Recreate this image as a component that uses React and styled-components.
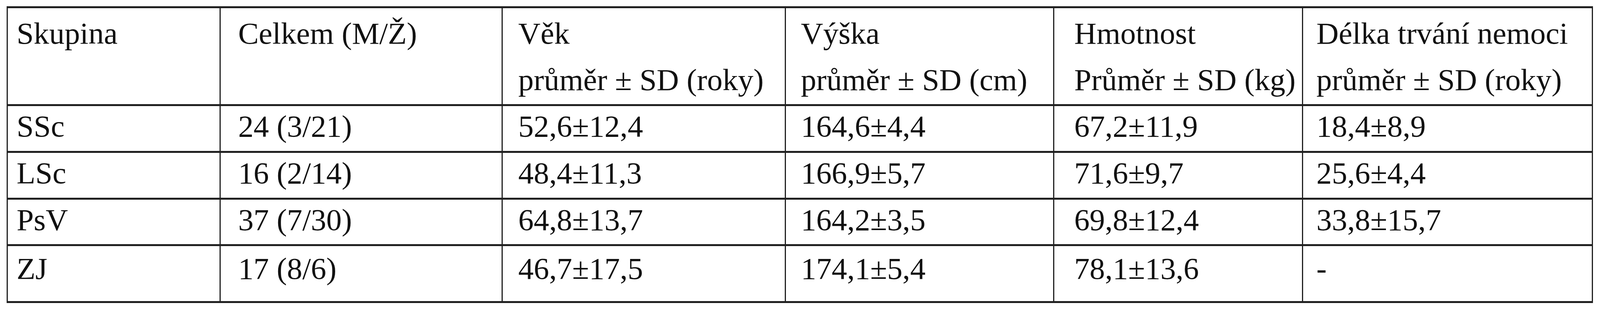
import React from "react";
import styled, { createGlobalStyle } from "styled-components";

/* Horizontal sizes are taken from the 5192px-wide reference and expressed
   relative to the viewport width, so the table keeps its proportions. */
const REF_W = 5192;
const hx = (px) => `${((px / REF_W) * 100).toFixed(5)}vw`;

const GlobalStyle = createGlobalStyle`
  html, body {
    margin: 0;
    padding: 0;
    background: #ffffff;
    overflow: hidden;
  }
  body {
    font-family: "Liberation Serif", "Times New Roman", serif;
    color: #111111;
  }
`;

const COLUMNS = [
  { width: 691, pad: 28 },
  { width: 915, pad: 56 },
  { width: 919, pad: 50 },
  { width: 871, pad: 48 },
  { width: 807, pad: 64 },
  { width: 940, pad: 43 },
];

const INK = "#202020";

const Page = styled.div`
  padding-top: 16px;
  padding-left: ${hx(22)};
`;

const Table = styled.div`
  display: flex;
  flex-direction: column;
  width: max-content;
  border-top: 5px solid ${INK};
  border-left: ${hx(5)} solid ${INK};
`;

const Row = styled.div`
  display: grid;
  grid-template-columns: ${COLUMNS.map((c) => hx(c.width)).join(" ")};
  height: ${(p) => p.$height}px;
`;

const Cell = styled.div`
  box-sizing: border-box;
  min-width: 0;
  border-right: ${hx(5)} solid ${INK};
  border-bottom: 5px solid ${INK};
  padding-left: ${(p) => hx(p.$pad)};
  padding-top: ${(p) => (p.$head ? 5 : p.$last ? 8 : 2)}px;
  font-size: ${hx(100)};
  line-height: ${(p) => (p.$head ? 119 : 100)}px;
  white-space: nowrap;
`;

const Line = styled.span`
  display: block;
`;

const header = [
  ["Skupina"],
  ["Celkem (M/Ž)"],
  ["Věk", "průměr ± SD (roky)"],
  ["Výška", "průměr ± SD (cm)"],
  ["Hmotnost", "Průměr ± SD (kg)"],
  ["Délka trvání nemoci", "průměr ± SD (roky)"],
];

const rows = [
  { h: 120, cells: ["SSc", "24 (3/21)", "52,6±12,4", "164,6±4,4", "67,2±11,9", "18,4±8,9"] },
  { h: 120, cells: ["LSc", "16 (2/14)", "48,4±11,3", "166,9±5,7", "71,6±9,7", "25,6±4,4"] },
  { h: 119, cells: ["PsV", "37 (7/30)", "64,8±13,7", "164,2±3,5", "69,8±12,4", "33,8±15,7"] },
  { h: 146, cells: ["ZJ", "17 (8/6)", "46,7±17,5", "174,1±5,4", "78,1±13,6", "-"], last: true },
];

export default function App() {
  return (
    <>
      <GlobalStyle />
      <Page>
        <Table>
          <Row $height={251}>
            {header.map((lines, i) => (
              <Cell key={i} $pad={COLUMNS[i].pad} $head>
                {lines.map((t, j) => (
                  <Line key={j}>{t}</Line>
                ))}
              </Cell>
            ))}
          </Row>
          {rows.map((r, ri) => (
            <Row key={ri} $height={r.h}>
              {r.cells.map((t, i) => (
                <Cell key={i} $pad={COLUMNS[i].pad} $last={r.last}>
                  {t}
                </Cell>
              ))}
            </Row>
          ))}
        </Table>
      </Page>
    </>
  );
}
